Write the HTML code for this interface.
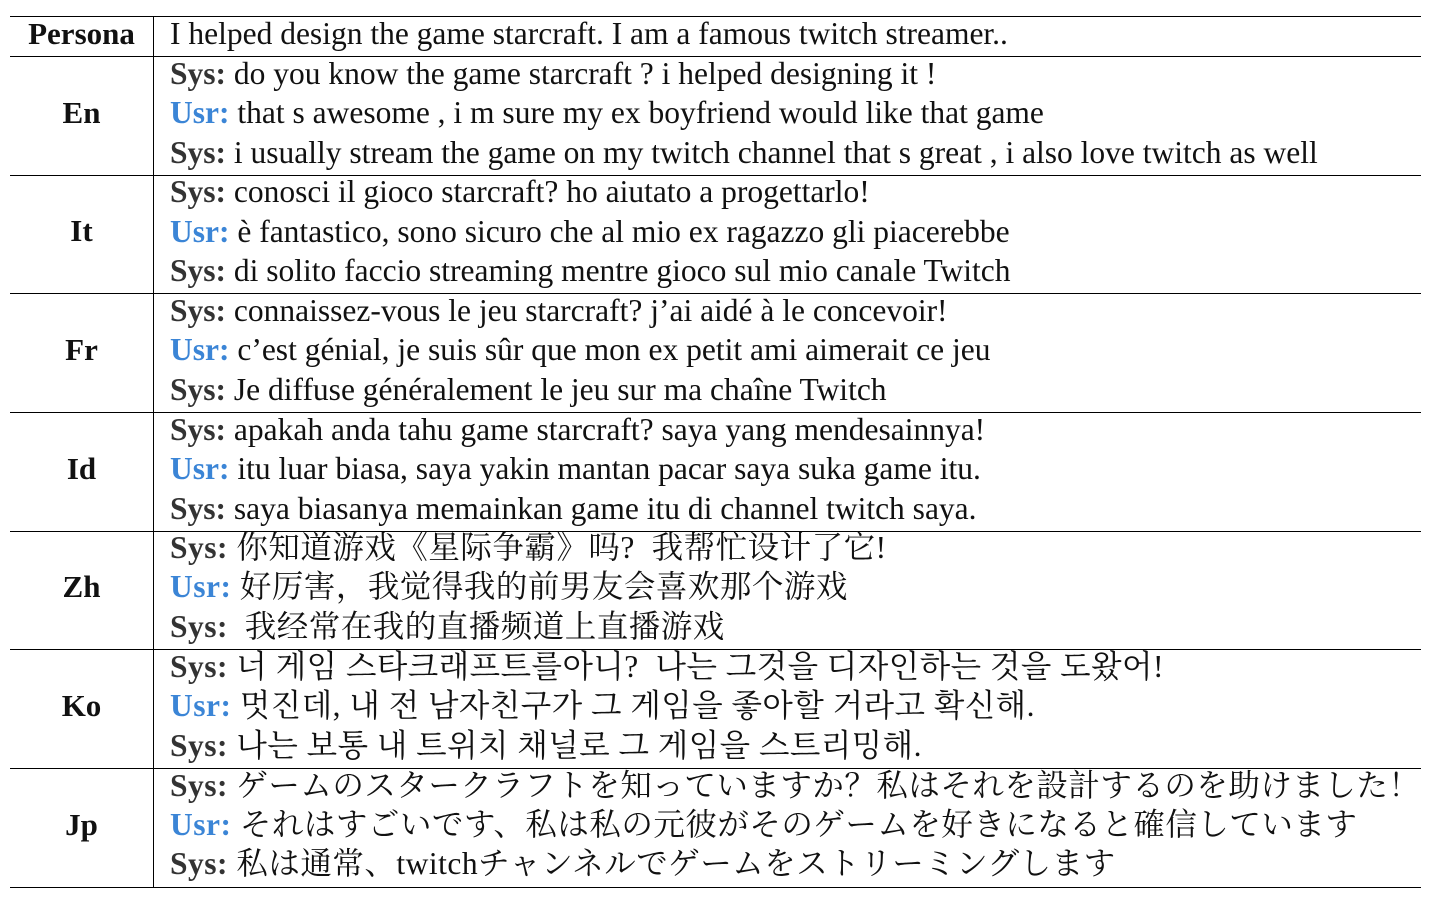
<!DOCTYPE html>
<html><head><meta charset="utf-8"><style>
body{margin:0;width:1448px;height:912px;background:#fff;position:relative;overflow:hidden;font-family:"Liberation Serif","Noto Serif CJK SC",serif;color:#111}
.h{position:absolute;left:10px;width:1411px;height:1px;background:#000}
.v{position:absolute;left:153px;width:1px;top:16px;height:871px;background:#000}
.t{position:absolute;left:170px;font-size:31.5px;line-height:34px;white-space:nowrap}
.p{position:absolute;left:10px;width:143px;text-align:center;font-size:31px;line-height:34px;font-weight:bold}
b{color:#333}
.u{color:#3b85d6;font-weight:bold}
.c{letter-spacing:0.5px}
</style></head><body>
<div class="h" style="top:16px"></div><div class="h" style="top:56px"></div>
<div class="h" style="top:175px"></div><div class="h" style="top:293px"></div>
<div class="h" style="top:412px"></div><div class="h" style="top:531px"></div>
<div class="h" style="top:649px"></div><div class="h" style="top:768px"></div>
<div class="h" style="top:887px"></div>
<div class="v"></div>
<div class="p" style="top:17px">Persona</div>
<div class="t" style="top:17px">I helped design the game starcraft. I am a famous twitch streamer..</div>
<div class="p" style="top:96px">En</div>
<div class="t" style="top:57px"><b>Sys:</b> do you know the game starcraft ? i helped designing it !</div>
<div class="t" style="top:96px"><span class="u">Usr:</span> that s awesome , i m sure my ex boyfriend would like that game</div>
<div class="t" style="top:136px"><b>Sys:</b> i usually stream the game on my twitch channel that s great , i also love twitch as well</div>
<div class="p" style="top:214px">It</div>
<div class="t" style="top:175px"><b>Sys:</b> conosci il gioco starcraft? ho aiutato a progettarlo!</div>
<div class="t" style="top:215px"><span class="u">Usr:</span> è fantastico, sono sicuro che al mio ex ragazzo gli piacerebbe</div>
<div class="t" style="top:254px"><b>Sys:</b> di solito faccio streaming mentre gioco sul mio canale Twitch</div>
<div class="p" style="top:333px">Fr</div>
<div class="t" style="top:294px"><b>Sys:</b> connaissez-vous le jeu starcraft? j’ai aidé à le concevoir!</div>
<div class="t" style="top:333px"><span class="u">Usr:</span> c’est génial, je suis sûr que mon ex petit ami aimerait ce jeu</div>
<div class="t" style="top:373px"><b>Sys:</b> Je diffuse généralement le jeu sur ma chaîne Twitch</div>
<div class="p" style="top:452px">Id</div>
<div class="t" style="top:413px"><b>Sys:</b> apakah anda tahu game starcraft? saya yang mendesainnya!</div>
<div class="t" style="top:452px"><span class="u">Usr:</span> itu luar biasa, saya yakin mantan pacar saya suka game itu.</div>
<div class="t" style="top:492px"><b>Sys:</b> saya biasanya memainkan game itu di channel twitch saya.</div>
<div class="p" style="top:570px">Zh</div>
<div class="t c" style="top:531px"><b>Sys:</b> 你知道游戏《星际争霸》吗? &nbsp;我帮忙设计了它!</div>
<div class="t c" style="top:570px"><span class="u">Usr:</span> 好厉害，我觉得我的前男友会喜欢那个游戏</div>
<div class="t c" style="top:610px"><b>Sys:</b> &nbsp;我经常在我的直播频道上直播游戏</div>
<div class="p" style="top:689px">Ko</div>
<div class="t c" style="top:650px"><b>Sys:</b> 너 게임 스타크래프트를아니? &nbsp;나는 그것을 디자인하는 것을 도왔어!</div>
<div class="t c" style="top:689px"><span class="u">Usr:</span> 멋진데, 내 전 남자친구가 그 게임을 좋아할 거라고 확신해.</div>
<div class="t c" style="top:729px"><b>Sys:</b> 나는 보통 내 트위치 채널로 그 게임을 스트리밍해.</div>
<div class="p" style="top:808px">Jp</div>
<div class="t c" style="top:769px"><b>Sys:</b> ゲームのスタークラフトを知っていますか？私はそれを設計するのを助けました！</div>
<div class="t c" style="top:808px"><span class="u">Usr:</span> それはすごいです、私は私の元彼がそのゲームを好きになると確信しています</div>
<div class="t c" style="top:847px"><b>Sys:</b> 私は通常、twitchチャンネルでゲームをストリーミングします</div>
</body></html>
